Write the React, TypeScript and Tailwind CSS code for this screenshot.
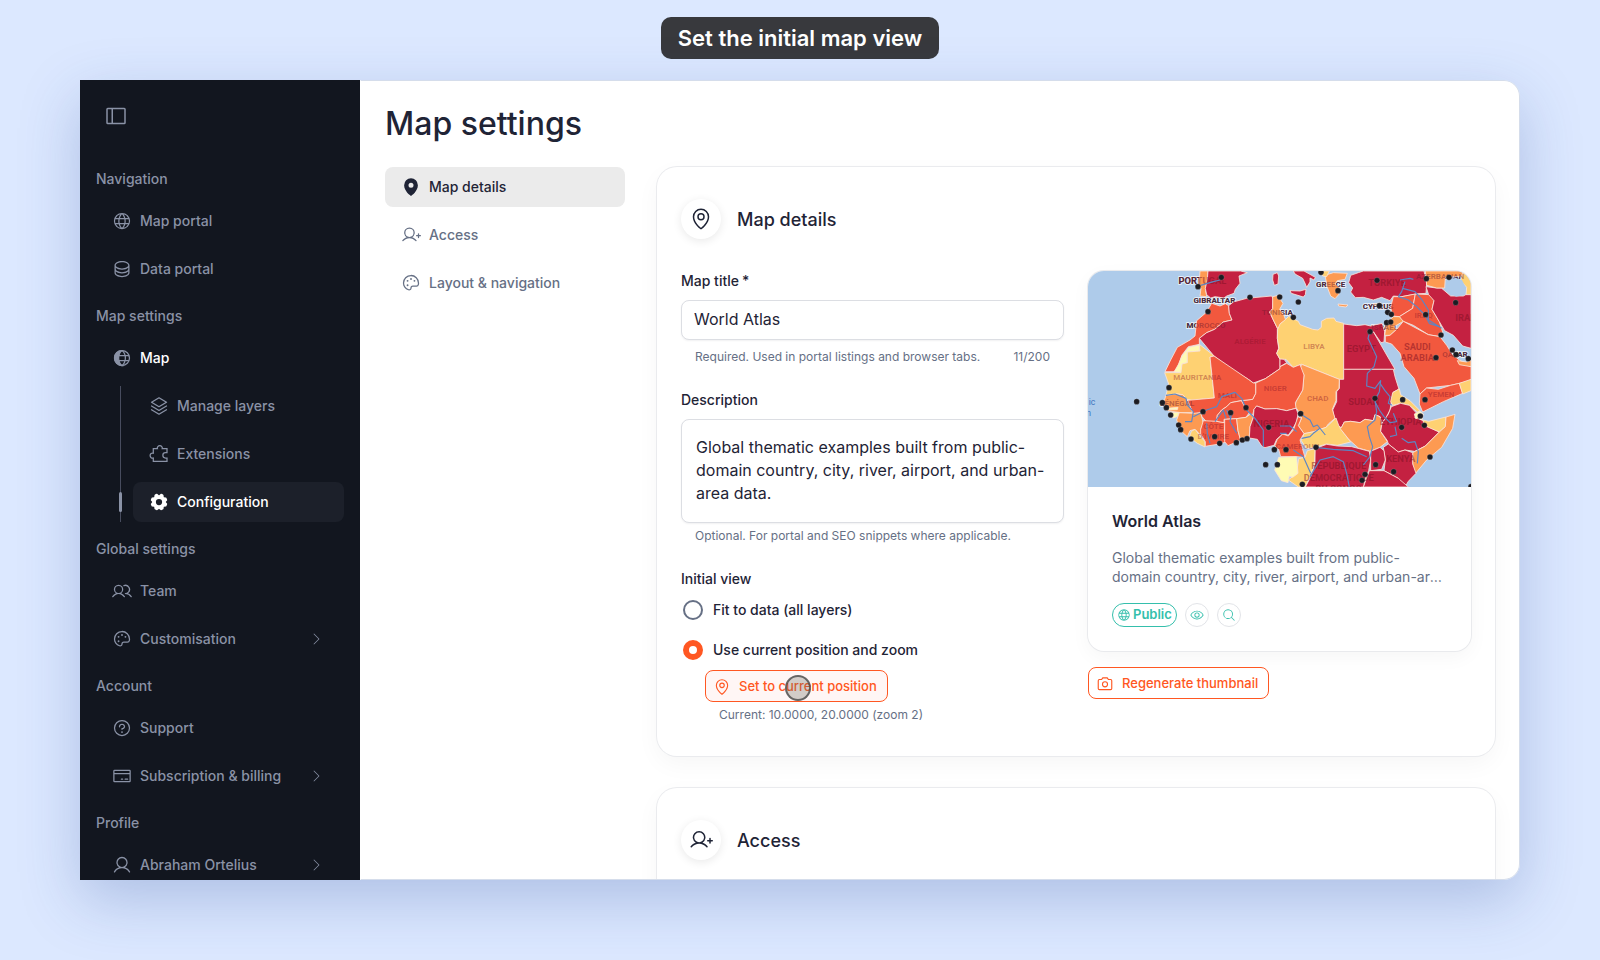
import type { ReactNode } from "react";
import type { IconType } from "react-icons";
import {
  PiCamera,
  PiCaretRightLight,
  PiCreditCard,
  PiDatabase,
  PiEye,
  PiGearFill,
  PiGlobe,
  PiMagnifyingGlass,
  PiMapPin,
  PiMapPinFill,
  PiPalette,
  PiQuestion,
  PiSidebarSimple,
  PiStack,
  PiUser,
  PiUserPlus,
  PiUsers,
} from "react-icons/pi";

const DESCRIPTION =
  "Global thematic examples built from public-domain country, city, river, airport, and urban-area data.";

const HalfGlobe = ({ className }: { className?: string }) => (
  <svg viewBox="0 0 20 20" fill="none" stroke="currentColor" strokeWidth="1.25" className={className}>
    <circle cx="10" cy="10" r="7.5" />
    <path d="M10 2.5c4.500 3.500 4.500 11.500 0 15M6 7.500h11M6 12.500h11" />
    <path d="M10 2.500a7.500 7.500 0 0 0 0 15c-4.500-3.500-4.500-11.500 0-15z" fill="currentColor" />
  </svg>
);

const Puzzle = ({ className }: { className?: string }) => (
  <svg viewBox="0 0 20 20" fill="none" stroke="currentColor" strokeWidth="1.25" className={className}>
    <path d="M4.300 17.300H18V14h-1.500a2.600 2.600 0 0 1 0-5.300H18v-4h-4.800c.5-1.600-.8-3-2.400-3s-2.900 1.400-2.400 3H4.300v4.500c-1.600-.5-3.200.7-3.200 2.400s1.600 2.900 3.200 2.400z" />
  </svg>
);

const NavHeading = ({ children }: { children: ReactNode }) => (
  <h2 className="mt-4 mb-[11px] text-sm leading-[22px] font-medium text-[#8a92a6]">{children}</h2>
);

interface NavItemProps {
  icon: IconType | typeof HalfGlobe;
  label: string;
  active?: boolean;
  current?: boolean;
  expandable?: boolean;
}

const NavItem = ({ icon: Icon, label, active, current, expandable }: NavItemProps) => (
  <a
    href="#"
    className={`flex h-10 items-center gap-2 rounded-lg pr-5 pl-4 text-sm font-medium ${
      current ? "bg-[#1c202a] text-white" : active ? "text-white" : "text-[#8a92a6]"
    }`}
  >
    <span className={current ? "" : "text-[#8a92a6]"}>
      <Icon className="size-5" />
    </span>
    <span className="flex-1">{label}</span>
    {expandable && <PiCaretRightLight className="size-4" />}
  </a>
);

const Sidebar = () => (
  <aside className="w-[280px] shrink-0 overflow-hidden bg-[#12161f] px-4">
    <button type="button" aria-label="Toggle sidebar" className="mt-6 ml-2 block p-0 text-[#8a92a6]">
      <PiSidebarSimple className="size-6" />
    </button>
    <nav className="pt-6">
      <NavHeading>Navigation</NavHeading>
      <div className="flex flex-col gap-2">
        <NavItem icon={PiGlobe} label="Map portal" />
        <NavItem icon={PiDatabase} label="Data portal" />
      </div>

      <NavHeading>Map settings</NavHeading>
      <NavItem icon={HalfGlobe} label="Map" active />
      <div className="relative mt-2 ml-6 flex flex-col gap-2 border-l border-[#474c5e] pl-3">
        <NavItem icon={PiStack} label="Manage layers" />
        <NavItem icon={Puzzle} label="Extensions" />
        <NavItem icon={PiGearFill} label="Configuration" active current />
        <span className="absolute bottom-[10px] -left-[2px] h-5 w-[3px] rounded-full bg-[#8a92a6]" />
      </div>

      <NavHeading>Global settings</NavHeading>
      <div className="flex flex-col gap-2">
        <NavItem icon={PiUsers} label="Team" />
        <NavItem icon={PiPalette} label="Customisation" expandable />
      </div>

      <NavHeading>Account</NavHeading>
      <div className="flex flex-col gap-2">
        <NavItem icon={PiQuestion} label="Support" />
        <NavItem icon={PiCreditCard} label="Subscription & billing" expandable />
      </div>

      <NavHeading>Profile</NavHeading>
      <NavItem icon={PiUser} label="Abraham Ortelius" expandable />
    </nav>
  </aside>
);

const SectionLink = ({ icon: Icon, label, active }: { icon: IconType; label: string; active?: boolean }) => (
  <a
    href="#"
    className={`flex h-10 items-center gap-2 rounded-lg px-4 text-sm font-medium ${
      active ? "bg-[#ebebeb] text-[#1f2436]" : "text-[#667085]"
    }`}
  >
    <Icon className="size-5" />
    {label}
  </a>
);

const Card = ({ icon: Icon, title, children }: { icon: IconType; title: string; children?: ReactNode }) => (
  <section className="rounded-[20px] bg-white px-6 py-8 shadow-[0_0_0_1px_#eaebee,0_8px_24px_rgba(0,0,0,0.04)]">
    <header className="mb-8 flex items-center gap-4">
      <span className="flex size-10 items-center justify-center rounded-full bg-white shadow-[0_2px_10px_rgba(0,0,0,0.09)]">
        <Icon className="size-6" />
      </span>
      <h2 className="pt-[2px] text-lg font-medium">{title}</h2>
    </header>
    {children}
  </section>
);

// land areas of the thumbnail, [fill class, points]
const CRIMSON = "fill-[#c42141]";
const RED = "fill-[#f2583e]";
const ORANGE = "fill-[#fd9a52]";
const YELLOW = "fill-[#fed172]";
const PALE = "fill-[#fffbb4]";

const areas: [string, string][] = [
  [ORANGE, "360,33 384,33 382,58 376,85 380,110 360,108 363,85 357,78"],
  [CRIMSON, "384,33 482,33 502,38 477,48 480,70 466,88 462,100 440,108 432,114 405,110 392,114 380,104 376,85 382,58"],
  [CRIMSON, "579,43 592,38 596,48 594,72 583,76 578,60"],
  [CRIMSON, "640,33 672,33 706,52 702,60 690,54 690,66 680,82 676,72 668,55 645,42"],
  [CRIMSON, "630,92 660,93 678,88 676,104 670,111 634,100"],
  [RED, "395,130 420,138 436,131 446,137 448,160 456,180 430,186 404,208 380,218 358,235 358,253 325,260 306,285 292,325 282,335 255,335 272,300 292,262 330,240 345,228 350,182 378,158"],
  [PALE, "358,255 360,273 322,276 322,308 306,312 303,337 282,336 296,312 306,288 326,262"],
  [YELLOW, "358,253 402,287 390,291 403,414 333,421 322,418 308,404 290,402 258,406 266,372 254,338 303,338 306,312 322,308 322,276 360,273"],
  [CRIMSON, "446,137 460,126 500,115 575,108 579,116 578,146 569,156 580,180 592,205 592,235 596,265 590,280 600,298 600,326 556,356 520,369 505,358 455,328 402,288 358,235 380,218 404,208 430,186 456,180 448,160"],
  [ORANGE, "578,110 603,104 601,118 609,130 599,148 611,164 617,180 603,190 597,208 592,204 580,180 569,156 578,146"],
  [YELLOW, "600,192 617,178 626,169 655,184 660,194 698,208 714,210 724,202 724,184 740,175 762,174 768,184 791,190 791,358 777,358 665,313 640,322 618,298 600,298 590,280 597,265 592,235 593,208"],
  [CRIMSON, "600,297 612,298 620,308 600,320"],
  [CRIMSON, "791,192 830,197 855,194 872,198 906,190 914,215 912,246 903,248 880,215 920,285 945,328 791,328"],
  [CRIMSON, "791,328 940,328 945,350 957,388 940,396 934,425 930,450 920,470 905,490 900,470 885,464 880,482 855,478 840,488 812,484 793,486 784,503 770,496 762,470 758,450 770,425 770,395 778,385 778,358 791,358"],
  [ORANGE, "665,313 778,358 777,385 768,395 768,422 757,448 765,475 745,492 738,502 702,515 672,521 655,497 665,474 652,448 645,440 648,425 668,390 672,345 660,325"],
  [RED, "527,369 556,356 600,326 600,320 620,310 640,322 660,314 672,345 668,390 646,428 648,445 620,452 590,446 555,447 530,438 522,448 518,465 500,455 484,422 518,418 527,400"],
  [RED, "390,291 402,288 505,358 520,369 527,369 527,400 518,418 484,422 452,428 440,440 425,450 412,466 410,484 380,486 366,470 362,458 340,462 322,421 403,414"],
  [ORANGE, "258,406 290,402 308,404 322,420 338,458 300,458 262,452 250,430"],
  [PALE, "262,445 294,442 292,449 260,450"],
  [PALE, "268,458 298,457 292,470 278,474"],
  [ORANGE, "298,458 340,460 362,458 370,490 362,508 366,530 345,508 330,512 322,530 302,512 290,480"],
  [YELLOW, "345,508 362,530 375,545 375,561 352,550 328,532 334,514"],
  [RED, "370,482 410,484 436,488 433,510 438,546 418,552 376,559 376,545 362,522 362,508"],
  [RED, "412,466 425,450 440,440 452,428 484,422 494,440 508,458 498,472 470,476 432,478 432,488 410,484"],
  [RED, "434,478 470,476 474,512 482,540 444,557 434,545 434,510"],
  [ORANGE, "470,476 498,472 512,462 520,472 510,500 507,538 482,542 474,512"],
  [CRIMSON, "522,448 530,438 555,447 590,446 620,452 648,445 654,460 650,485 636,510 625,525 608,522 590,538 582,556 555,563 545,558 532,538 508,534 510,500 520,472"],
  [RED, "654,470 664,475 655,497 672,521 660,540 675,592 650,590 602,590 596,568 584,558 592,538 608,522 625,528 640,510"],
  [YELLOW, "672,521 702,515 738,502 768,474 776,496 792,520 812,546 772,556 740,552 705,562 680,566 664,542"],
  [ORANGE, "784,503 793,486 812,484 840,488 855,478 880,482 885,464 900,470 905,490 902,514 922,545 900,562 870,574 835,564 808,540 792,520 780,505"],
  [YELLOW, "938,398 958,386 962,404 990,422 1020,452 1012,456 988,436 962,430 938,436 932,425"],
  [CRIMSON, "934,440 962,430 988,436 1010,460 1005,474 1028,480 1036,496 1078,516 1036,558 1004,574 975,570 955,576 925,552 922,542 902,514 906,490 925,462"],
  [PALE, "1003,462 1020,454 1030,462 1026,480 1006,474"],
  [YELLOW, "1028,480 1046,484 1098,471 1096,500 1078,516 1036,498"],
  [ORANGE, "1098,471 1125,463 1118,505 1085,562 1040,600 1005,642 998,612 998,578 1036,558 1078,516 1096,500"],
  [CRIMSON, "910,562 925,552 955,576 975,570 998,578 998,612 1008,640 985,664 975,681 955,655 912,632 916,600"],
  [CRIMSON, "872,574 900,562 912,572 916,600 905,628 872,632"],
  [CRIMSON, "868,632 912,632 955,655 985,681 850,681"],
  [CRIMSON, "705,566 740,553 772,558 815,560 868,574 872,600 866,632 858,650 850,681 676,681 695,645 705,610"],
  [YELLOW, "675,592 682,572 705,566 703,612 690,650 675,681 655,681 625,660 650,640 656,596"],
  [PALE, "596,592 650,590 654,640 638,652 628,648 624,668 604,662 584,630"],
  [ORANGE, "735,46 760,38 802,40 795,58 772,62 765,72 780,85 776,104 765,116 752,108 742,82"],
  [YELLOW, "718,33 748,33 740,50 728,48"],
  [ORANGE, "774,132 804,135 798,141 776,138"],
  [CRIMSON, "812,46 835,38 850,33 1032,33 1040,68 1038,100 1008,102 965,110 940,108 930,122 905,112 880,120 850,112 826,113 812,96 818,84 806,68"],
  [PALE, "880,132 902,128 898,136 886,138"],
  [RED, "940,110 965,110 1006,102 998,145 958,170 938,168 932,142"],
  [RED, "1006,102 1050,104 1062,122 1056,148 1078,185 1088,216 1080,230 1045,224 1000,196 965,182 958,170 998,145"],
  [ORANGE, "920,188 940,170 958,170 970,184 942,200 950,208 930,226 914,226"],
  [CRIMSON, "1038,80 1070,84 1084,84 1112,108 1150,108 1173,95 1173,265 1148,258 1120,226 1094,212 1078,185 1056,148 1062,122 1046,104"],
  [RED, "916,228 930,226 950,208 970,184 1045,224 1080,230 1100,256 1118,284 1138,300 1173,320 1173,362 1112,376 1040,384 1020,402 1002,355 972,320 960,280 935,252 916,246"],
  [ORANGE, "1036,33 1173,33 1173,45 1126,50 1096,52 1094,84 1070,84 1040,76"],
  [YELLOW, "1148,40 1173,48 1173,104 1158,104 1160,82 1142,62"],
  [RED, "1020,402 1040,384 1075,388 1112,376 1138,370 1148,400 1090,425 1028,456 1018,432"],
  [YELLOW, "1138,370 1173,358 1173,392 1148,402"],
  [ORANGE, "1132,302 1160,306 1173,300 1173,320 1138,314"],
];

const rivers = [
  "M870,212 864,235 878,265 890,290 882,320 862,340 860,378 885,385 902,362 898,395 885,420 890,455 885,480 862,500 868,530 878,560 870,590 850,615",
  "M900,370 915,392 930,410 925,430 935,435",
  "M885,425 898,450 912,470 930,488 950,485 940,460",
  "M945,500 950,525 930,530",
  "M965,535 985,548 1005,545 1015,575 1012,610",
  "M258,406 285,402 318,415 322,435 340,455 335,485 315,485",
  "M340,470 380,450 410,440 425,410 465,397 485,415 500,450 525,475 550,510 550,560",
  "M380,490 382,520 390,550",
  "M405,485 430,450 438,475 M455,460 450,485 470,520 M440,450 452,475",
  "M960,60 990,55 1000,58 M975,65 965,95 955,110 M968,85 1005,95 1025,118 1045,150 1045,180 1085,205",
  "M955,110 985,120 1010,140 1035,165 1048,190 1078,200",
  "M662,462 690,480 700,500 712,495 736,525 M665,535 690,530 700,520 720,505",
  "M600,498 630,498 650,515 M600,520 620,520",
  "M707,562 760,568 820,572 860,590",
  "M690,650 720,600 760,590 790,605 800,640 808,681",
  "M640,570 670,590 692,640",
  "M362,76 400,65 420,60",
];

const capitals = [
  [424, 52], [354, 80], [510, 112], [384, 155], [267, 383], [170, 425], [247, 428], [259, 443], [272, 465],
  [296, 495], [302, 509], [333, 537], [369, 455], [452, 458], [498, 443], [404, 530], [419, 550], [469, 548],
  [487, 540], [501, 536], [566, 502], [583, 569], [557, 614], [592, 614], [599, 111], [655, 126], [640, 172],
  [723, 37], [774, 92], [891, 61], [898, 137], [923, 157], [934, 163], [920, 188], [932, 186], [870, 215],
  [1039, 56], [1107, 52], [1127, 128], [1037, 164], [1083, 225], [1117, 270], [1128, 284], [1165, 296],
  [1068, 293], [885, 415], [968, 419], [1035, 419], [1021, 468], [1033, 496], [965, 502], [662, 461],
  [618, 569], [708, 562], [887, 614], [941, 635], [855, 643], [846, 661], [667, 673], [1050, 591], [1173, 680],
];

type MapLabel = [x: number, y: number, text: string];

// names that run across a coast: dark over water, tinted over land
const coastLabels: MapLabel[] = [
  [403, 128, "GIBRALTAR"], [378, 204, "MOROCCO"], [752, 82, "GREECE"], [894, 146, "CYPRUS"],
  [1125, 290, "QATAR"], [1080, 58, "AZERBAIJAN"], [592, 164, "TUNISIA"], [291, 437, "SÉNÉGAL"], [914, 210, "ISRAEL"],
];

const landLabels: MapLabel[] = [
  [510, 251, "ALGÉRIE"], [352, 360, "MAURITANIA"], [442, 413, "MALI"], [586, 393, "NIGER"],
  [400, 507, "CÔTE"], [400, 536, "D'IVOIRE"], [702, 268, "LIBYA"], [713, 422, "CHAD"],
  [1031, 174, "IRAQ"], [1083, 412, "YEMEN"], [653, 566, "CAMEROUN"],
];

const bigLabels: MapLabel[] = [
  [921, 78, "TÜRKIYE"], [844, 277, "EGYPT"], [1012, 270, "SAUDI"], [1012, 302, "ARABIA"], [851, 435, "SUDAN"],
  [962, 496, "ETHIOPIA"], [574, 502, "NIGERIA"], [1158, 183, "IRAN"], [962, 606, "KENYA"], [776, 627, "RÉPUBLIQUE"],
  [776, 663, "DÉMOCRATIQUE"], [776, 697, "DU CONGO"],
];

const Labels = ({ items }: { items: MapLabel[] }) => (
  <>
    {items.map(([x, y, text]) => (
      <text key={text} x={x} y={y}>{text}</text>
    ))}
  </>
);

const MapThumbnail = () => (
  <svg viewBox="24 33 1149 648" preserveAspectRatio="xMidYMid slice" className="block h-[216px] w-full bg-[#aecbea]">
    <g
      textAnchor="middle"
      fontWeight="700"
      strokeWidth="6"
      strokeLinejoin="round"
      paintOrder="stroke"
      className="fill-[#33384c] stroke-white/70 font-['Roboto',sans-serif]"
    >
      <g fontSize="24">
        <Labels items={coastLabels} />
      </g>
      <text x="367" y="72" fontSize="28">PORTUGAL</text>
    </g>
    <g className="stroke-[#fbe3d8]" strokeWidth="2.5" strokeLinejoin="round">
      {areas.map(([fill, points]) => (
        <polygon key={points} points={points} className={fill} />
      ))}
    </g>
    <path d="M1098,56 1120,50 1146,60 1158,84 1154,104 1128,110 1112,100 1104,80Z" className="fill-[#aecbea]" />
    <g textAnchor="middle" fontWeight="700" className="font-['Roboto',sans-serif]">
      <g fontSize="24" className="fill-[#6d1a2c]/45">
        <Labels items={coastLabels} />
      </g>
      <g fontSize="24" className="fill-[#8c1226]/40">
        <Labels items={landLabels} />
      </g>
      <g fontSize="28" className="fill-[#7d0f22]/50">
        <Labels items={bigLabels} />
        <text x="367" y="72">PORTUGAL</text>
      </g>
    </g>
    <g className="fill-none stroke-[#5c86c4]" strokeWidth="3.500" strokeLinejoin="round">
      {rivers.map((d) => (
        <path key={d} d={d} />
      ))}
    </g>
    <g fontSize="26" textAnchor="end" className="fill-[#3f74bd] font-['Roboto',sans-serif]">
      <text x="46" y="434">ic</text>
      <text x="33" y="467">n</text>
    </g>
    <g className="fill-[#1c1c22] stroke-white/50" strokeWidth="1">
      {capitals.map(([x, y]) => (
        <circle key={`${x}-${y}`} cx={x} cy={y} r="8.500" />
      ))}
    </g>
  </svg>
);

const ThumbnailPreview = () => (
  <div>
    <article className="overflow-hidden rounded-2xl bg-white shadow-[0_0_0_1px_#e9eaed,0_6px_20px_rgba(0,0,0,0.04)]">
      <MapThumbnail />
      <div className="p-6">
        <h3 className="mb-[17px] leading-5 font-semibold">World Atlas</h3>
        <p className="mb-[17px] line-clamp-2 text-sm leading-[19px] text-[#667085]">{DESCRIPTION}</p>
        <div className="flex gap-2 text-[#35bfac]">
          <span className="flex h-6 items-center gap-[2px] rounded-full border border-current px-1 text-[13px] font-semibold">
            <PiGlobe className="size-[14px]" />
            Public
          </span>
          <span className="flex size-6 items-center justify-center rounded-full border border-[#e2e4e8]">
            <PiEye className="size-[14px]" />
          </span>
          <span className="flex size-6 items-center justify-center rounded-full border border-[#e2e4e8]">
            <PiMagnifyingGlass className="size-[14px]" />
          </span>
        </div>
      </div>
    </article>
    <button
      type="button"
      className="mt-4 flex h-8 items-center gap-2 rounded-lg border border-[#ff5722] pt-[2px] pr-[10px] pl-[7px] text-[13px] font-medium text-[#ff5722]"
    >
      <PiCamera className="size-[18px]" />
      Regenerate thumbnail
    </button>
  </div>
);

const labelClass = "mb-[9px] block text-sm leading-5 font-medium";
const fieldClass =
  "block w-full rounded-lg border border-[#dcdee3] bg-white text-base text-[#1f2436] shadow-[0_1px_2px_rgba(16,24,40,0.06)]";
const hintClass = "text-xs leading-[18px] text-[#667085]";
const radioClass =
  "size-5 appearance-none rounded-full border-2 border-[#667085] bg-white checked:border-[6px] checked:border-[#ff5722]";

const DetailsForm = () => (
  <form>
    <label htmlFor="title" className={labelClass}>
      Map title<span className="ml-[3px]">*</span>
    </label>
    <input id="title" type="text" defaultValue="World Atlas" className={`${fieldClass} h-10 px-3 pb-[2px]`} />
    <div className={`mt-2 mb-6 flex justify-between px-[14px] ${hintClass}`}>
      <span>Required. Used in portal listings and browser tabs.</span>
      <span>11/200</span>
    </div>

    <label htmlFor="description" className={labelClass}>
      Description
    </label>
    <textarea
      id="description"
      defaultValue={DESCRIPTION}
      className={`${fieldClass} h-[104px] resize-none overflow-hidden px-[14px] py-4 leading-[23px]`}
    />
    <p className={`mt-1 mb-6 px-[14px] ${hintClass}`}>Optional. For portal and SEO snippets where applicable.</p>

    <fieldset>
      <legend className="pb-px text-sm leading-5 font-medium">Initial view</legend>
      <label className="flex h-10 items-center gap-[10px] pl-[2px] text-sm font-medium">
        <input type="radio" name="initial-view" className={radioClass} />
        Fit to data (all layers)
      </label>
      <label className="flex h-10 items-center gap-[10px] pl-[2px] text-sm font-medium">
        <input type="radio" name="initial-view" defaultChecked className={radioClass} />
        Use current position and zoom
      </label>
      <div className="ml-6">
        <button
          type="button"
          className="relative flex h-8 items-center gap-2 rounded-lg border border-[#ff5722] bg-[#fff6f5] pt-[2px] pr-[10px] pl-[7px] text-[13px] font-medium text-[#ff5722]"
        >
          <PiMapPin className="size-[18px]" />
          Set to current position
          {/* pointer marker */}
          <span className="absolute top-1 left-[79px] size-[26px] rounded-full border-2 border-[#4a4a4a]/80 bg-[#6b6b60]/30" />
        </button>
        <p className={`mt-1 px-[14px] ${hintClass}`}>Current: 10.0000, 20.0000 (zoom 2)</p>
      </div>
    </fieldset>
  </form>
);

const App = () => (
  <div className="flex h-screen flex-col bg-[#dce8ff] font-['Inter',sans-serif] text-[#1f2436]">
    <div className="flex h-20 shrink-0 items-start justify-center pt-[17px]">
      <p className="rounded-[10px] bg-[#38393d] px-[17px] text-[22px] leading-[42px] font-semibold text-white">
        Set the initial map view
      </p>
    </div>

    <div className="mx-20 mb-20 flex min-h-0 flex-1 overflow-hidden rounded-r-2xl shadow-[0_20px_60px_rgba(40,75,150,0.26)]">
      <Sidebar />
      <main className="flex-1 overflow-hidden rounded-r-2xl border border-[#d5ddeb] border-l-white bg-white px-6 pt-6">
        <h1 className="mb-6 text-[32px] leading-[38px] font-medium">Map settings</h1>
        <div className="flex items-start gap-8">
          <nav className="flex w-60 shrink-0 flex-col gap-2">
            <SectionLink icon={PiMapPinFill} label="Map details" active />
            <SectionLink icon={PiUserPlus} label="Access" />
            <SectionLink icon={PiPalette} label="Layout & navigation" />
          </nav>
          <div className="flex flex-1 flex-col gap-8">
            <Card icon={PiMapPin} title="Map details">
              <div className="grid grid-cols-2 gap-6">
                <DetailsForm />
                <ThumbnailPreview />
              </div>
            </Card>
            <Card icon={PiUserPlus} title="Access" />
          </div>
        </div>
      </main>
    </div>
  </div>
);

export default App;
